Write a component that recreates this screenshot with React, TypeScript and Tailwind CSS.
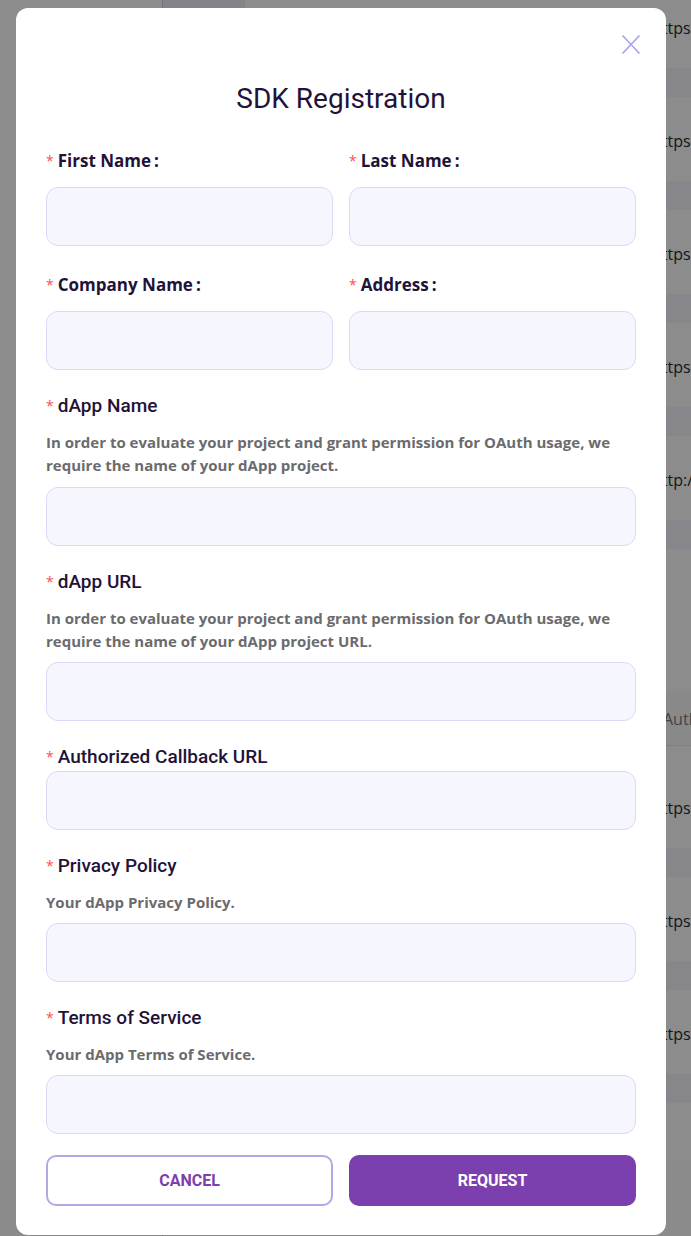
import React from 'react';

const rowTexts = ['https://', 'https://', 'https://', 'https://', 'http://'];
const lowerRows = ['https://', 'https://', 'https://'];

function BgRow({ text, first }: { text: string; first?: boolean }) {
  return (
    <div className="flex h-[113px] flex-col">
      <div className="relative flex h-[56px] items-center overflow-hidden pl-[489px] font-['Open_Sans',sans-serif] text-[16px] whitespace-nowrap text-[#2a2a33]">
        {first && <div className="absolute left-[0px] top-0 h-[56px] w-[82px] bg-[#f2eef9]" />}
        {text}
      </div>
      <div className="mt-[12px] h-[29px] bg-[#f5f5fd]" />
    </div>
  );
}

function Background() {
  return (
    <div className="flex h-full bg-white">
      {/* sidebar */}
      <div className="flex w-[163px] shrink-0 flex-col border-r border-[#cfcbe0]">
        <div className="flex-1" />
        <div className="h-[73px] bg-[#fdfdff]" />
      </div>
      {/* main */}
      <div className="flex min-w-0 flex-1 flex-col overflow-hidden">
        {rowTexts.map((t, i) => (
          <BgRow key={i} text={t} first={i === 0} />
        ))}
        <div className="h-[127px]" />
        <div className="flex h-[54px] items-center overflow-hidden border-b border-[#e6e6ee] bg-[#fafafa] pl-[500px] font-['Open_Sans',sans-serif] text-[16px] whitespace-nowrap text-[#7a7a80]">
          Auth
        </div>
        <div className="h-[34px]" />
        {lowerRows.map((t, i) => (
          <BgRow key={i} text={t} />
        ))}
        <div className="flex-1" />
        <div className="h-[73px] bg-[#fdfdff]" />
      </div>
    </div>
  );
}

function Req() {
  return <span className="mr-1 font-['Open_Sans',sans-serif] text-[14px] font-normal text-[#ff4d4f]">*</span>;
}

function ColonLabel({ children }: { children: React.ReactNode }) {
  return (
    <div className="flex h-[24px] items-center font-['Open_Sans',sans-serif] text-[17px] font-bold leading-[24px] text-[#1f1339]">
      <Req />
      {children}
      <span className="ml-[3px]">:</span>
    </div>
  );
}

function Label({ children }: { children: React.ReactNode }) {
  return (
    <div className="flex h-[24px] items-center font-['Roboto',sans-serif] text-[19px] font-medium leading-[24px] text-[#1f1339]">
      <Req />
      {children}
    </div>
  );
}

function Help({ children }: { children: React.ReactNode }) {
  return (
    <p className="mt-[13px] font-['Open_Sans',sans-serif] text-[15px] font-bold leading-[23px] text-[#6b6b6d]">
      {children}
    </p>
  );
}

function Field() {
  return (
    <input className="block h-[59px] w-full rounded-[12px] border border-[#dcd8fa] bg-[#f6f6ff] px-4 outline-none" />
  );
}

export default function App() {
  return (
    <div className="relative h-[1236px] w-full overflow-hidden">
      <Background />

      {/* overlay */}
      <div className="absolute inset-0 bg-black/45" />

      {/* modal */}
      <div className="absolute left-[16px] top-[8px] w-[650px] rounded-[12px] bg-white px-[30px] pb-[29px] pt-[71px]">
        <button className="absolute right-[26px] top-[27px]" aria-label="Close">
          <svg width="18" height="19" viewBox="0 0 18 19" fill="none">
            <path d="M1 1 17 18M17 1 1 18" stroke="#a7a2f5" strokeWidth="1.7" strokeLinecap="round" />
          </svg>
        </button>

        <h1 className="h-[40px] text-center font-['Roboto',sans-serif] text-[28px] font-normal leading-[40px] text-[#1f1339]">
          SDK Registration
        </h1>

        <div className="mt-[30px] grid grid-cols-2 gap-x-4">
          <div>
            <ColonLabel>First Name</ColonLabel>
            <div className="mt-[14px]"><Field /></div>
          </div>
          <div>
            <ColonLabel>Last Name</ColonLabel>
            <div className="mt-[14px]"><Field /></div>
          </div>
        </div>

        <div className="mt-[27px] grid grid-cols-2 gap-x-4">
          <div>
            <ColonLabel>Company Name</ColonLabel>
            <div className="mt-[14px]"><Field /></div>
          </div>
          <div>
            <ColonLabel>Address</ColonLabel>
            <div className="mt-[14px]"><Field /></div>
          </div>
        </div>

        <div className="mt-[24px]">
          <Label>dApp Name</Label>
          <Help>
            In order to evaluate your project and grant permission for OAuth usage, we require the name of your dApp
            project.
          </Help>
          <div className="mt-[10px]"><Field /></div>
        </div>

        <div className="mt-[24px]">
          <Label>dApp URL</Label>
          <Help>
            In order to evaluate your project and grant permission for OAuth usage, we require the name of your dApp
            project URL.
          </Help>
          <div className="mt-[9px]"><Field /></div>
        </div>

        <div className="mt-[24px]">
          <Label>Authorized Callback URL</Label>
          <div className="mt-[2px]"><Field /></div>
        </div>

        <div className="mt-[24px]">
          <Label>Privacy Policy</Label>
          <Help>Your dApp Privacy Policy.</Help>
          <div className="mt-[9px]"><Field /></div>
        </div>

        <div className="mt-[24px]">
          <Label>Terms of Service</Label>
          <Help>Your dApp Terms of Service.</Help>
          <div className="mt-[9px]"><Field /></div>
        </div>

        <div className="mt-[21px] grid grid-cols-2 gap-x-4">
          <button className="h-[51px] rounded-[10px] border-2 border-[#b5a7e6] bg-white font-['Roboto',sans-serif] text-[16px] font-bold uppercase text-[#7b40ad]">
            Cancel
          </button>
          <button className="h-[51px] rounded-[10px] bg-[#7b40ad] font-['Roboto',sans-serif] text-[16px] font-bold uppercase text-white">
            Request
          </button>
        </div>
      </div>
    </div>
  );
}
